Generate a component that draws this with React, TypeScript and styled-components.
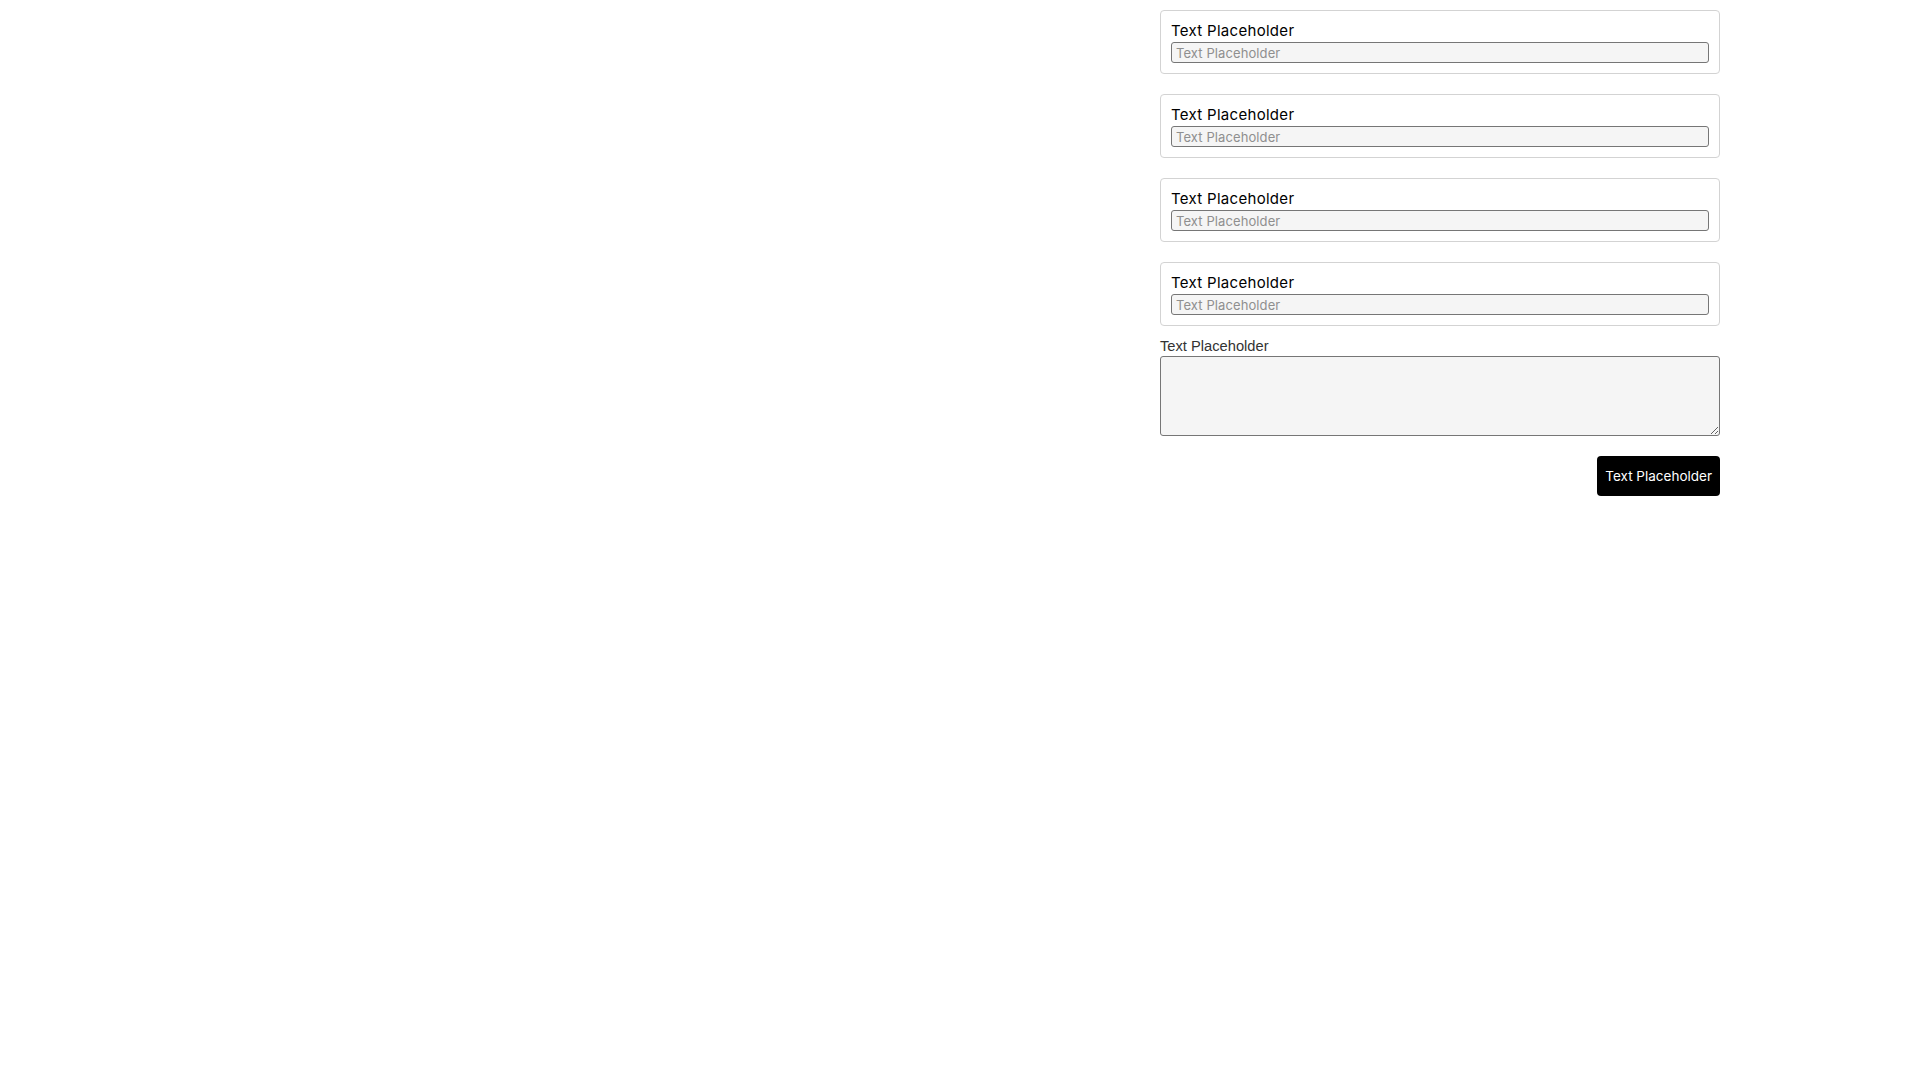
import React from 'react';
import styled, {createGlobalStyle} from 'styled-components';

const GlobalStyle = createGlobalStyle`
  html, body {
    margin: 0;
    padding: 0;
    background: #fff;
  }

  body {
    font-family: Inter, "Liberation Sans", Arial, sans-serif;
    color: #000;
  }
`;

const Page = styled.div`
  display: flex;
  justify-content: flex-end;

  padding: 10px 200px 0 0;
`;

const Form = styled.form`
  display: flex;
  flex-direction: column;

  width: 560px;
`;

const FieldCard = styled.div`
  display: flex;
  flex-direction: column;

  padding: 10px;
  margin-bottom: 20px;

  border: 1px solid #d3d3d3;
  border-radius: 4px;
`;

const FieldLabel = styled.label`
  display: block;

  font-family: Inter, "Liberation Sans", sans-serif;
  font-size: 15px;
  letter-spacing: 0.3px;
  line-height: 20px;
  margin-bottom: 1px;
  color: #000;
`;

const TextInput = styled.input`
  box-sizing: border-box;
  width: 100%;
  height: 21px;
  padding: 0 4px;
  margin: 0;

  border: 1px solid #767676;
  border-radius: 3px;
  background-color: #f5f5f5;

  font-family: Inter, "Liberation Sans", sans-serif;
  font-size: 13px;
  letter-spacing: 0.1px;
  line-height: 17px;
  color: #000;

  &::placeholder {
    color: #8f8f8f;
  }
`;

const NoteLabel = styled.label`
  display: block;

  margin: -9px 0 1px;

  font-family: "Liberation Sans", Arial, sans-serif;
  font-size: 14.7px;
  line-height: 18px;
  color: #333;
`;

const NoteArea = styled.textarea`
  box-sizing: border-box;
  display: block;
  width: 100%;
  height: 80px;
  margin: 0;

  border: 1px solid #767676;
  border-radius: 3px;
  background-color: #f5f5f5;

  font-family: Inter, "Liberation Sans", sans-serif;
  font-size: 13px;
`;

const Actions = styled.div`
  display: flex;
  justify-content: flex-end;

  margin-top: 20px;
`;

const SubmitBtn = styled.button`
  height: 40px;
  padding: 0 8px;

  border: none;
  border-radius: 4px;
  background-color: #000;

  font-family: Inter, "Liberation Sans", sans-serif;
  font-size: 13.5px;
  color: #fff;

  cursor: pointer;
`;

const fields = ['Text Placeholder', 'Text Placeholder', 'Text Placeholder', 'Text Placeholder'];

export default function App() {
    return (
        <>
            <GlobalStyle/>
            <Page>
                <Form onSubmit={e => e.preventDefault()}>
                    {fields.map((label, i) =>
                        <FieldCard key={i}>
                            <FieldLabel htmlFor={`field-${i}`}>{label}</FieldLabel>
                            <TextInput id={`field-${i}`} placeholder="Text Placeholder"/>
                        </FieldCard>
                    )}
                    <NoteLabel htmlFor="note">Text Placeholder</NoteLabel>
                    <NoteArea id="note"/>
                    <Actions>
                        <SubmitBtn type="submit">Text Placeholder</SubmitBtn>
                    </Actions>
                </Form>
            </Page>
        </>
    );
}
